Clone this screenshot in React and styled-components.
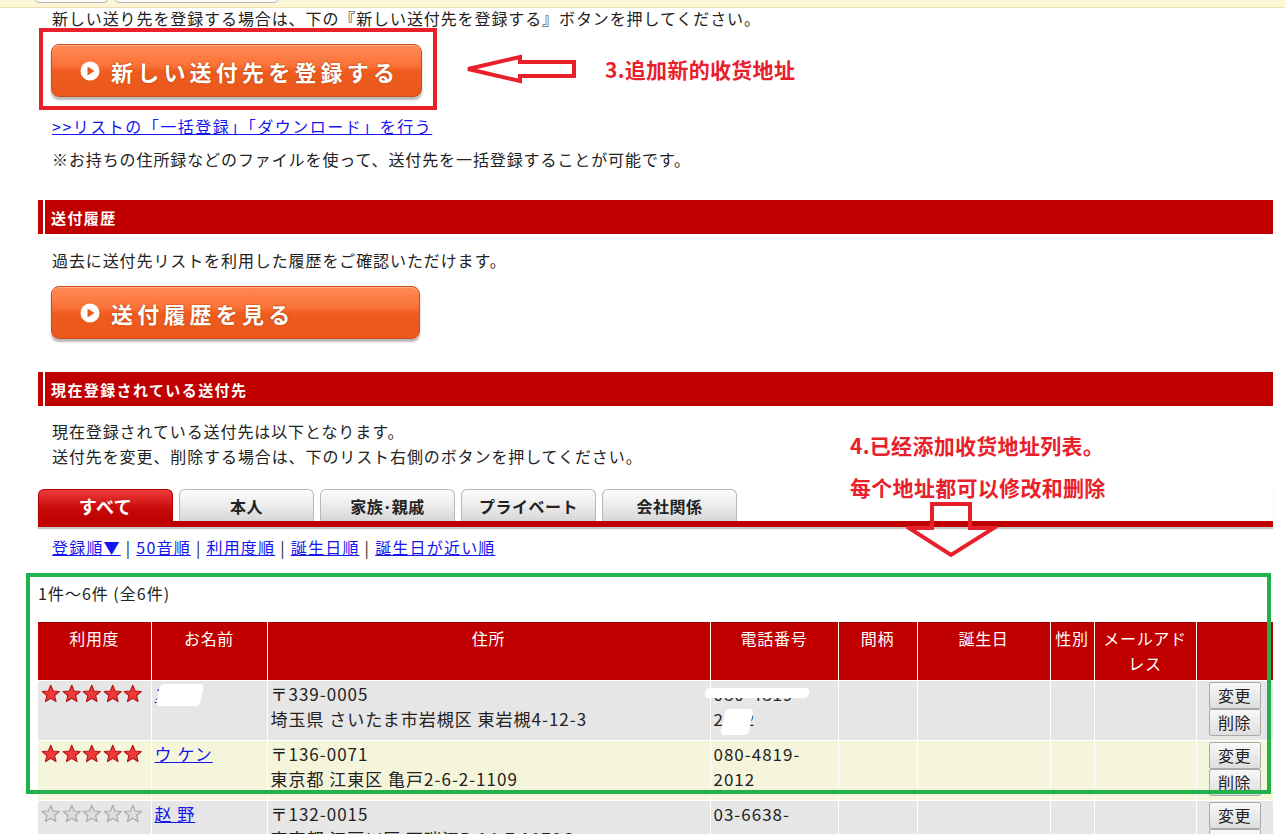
import React from 'react';
import styled, {createGlobalStyle} from "styled-components";

const GlobalStyle = createGlobalStyle`
  html, body {
    margin: 0;
    padding: 0;
    overflow: hidden;
    background: #fff;
  }
  body {
    font-family: "Noto Sans CJK JP", "Liberation Sans", sans-serif;
    color: #222;
  }
`;

const RED = "#c00000";
const MARK = "#e8202a";
const LINK = "#1515ee";

/* top strip */
const TopStrip = styled.div`
  height: 7px;
  background: #fdf6d6;
  border-bottom: 1px solid #eee2b0;
  display: flex;
  gap: 7px;
  padding-left: 35px;
  align-items: flex-end;
  overflow: hidden;
`;

const StripTab = styled.div`
  width: ${(props) => props.$w}px;
  height: 10px;
  margin-bottom: 4px;
  border: 1px solid #b8b8b8;
  border-radius: 0 0 4px 4px;
  background: #fbfbfb;
`;

const Page = styled.div`
  position: relative;
  width: 1235px;
  padding-left: 38px;
  letter-spacing: 0.9px;
`;

const Text = styled.p`
  margin: ${(props) => props.$mt || 0}px 0 0;
  padding-left: 14px;
  font-size: 16px;
  line-height: ${(props) => props.$lh || 20}px;
  letter-spacing: ${(props) => props.$ls || 0.9}px;
  white-space: nowrap;
`;

const Link = styled.a`
  color: ${LINK};
  text-decoration: underline;
  cursor: pointer;
`;

/* annotation */
const MarkRow = styled.div`
  display: flex;
  align-items: center;
`;

const MarkBox = styled.div`
  margin-left: 1px;
  border: 4px solid ${MARK};
  padding: 12px 11px 9px 8px;
`;

const MarkText = styled.span`
  font-family: "Noto Sans CJK SC", "Liberation Sans", sans-serif;
  font-weight: 700;
  font-size: 21px;
  line-height: ${(props) => props.$lh || 30}px;
  color: ${MARK};
  letter-spacing: 0.3px;
  margin-left: ${(props) => props.$ml || 0}px;
  display: block;
  white-space: nowrap;
`;

const ArrowSvg = styled.svg`
  display: block;
  margin-left: ${(props) => props.$ml || 0}px;
  flex: none;
`;

const Note4 = styled.div`
  position: absolute;
  left: 850px;
  top: 416px;
`;

const DownArrow = styled.svg`
  position: absolute;
  left: 906px;
  top: 493px;
`;

const GreenBox = styled.div`
  position: absolute;
  left: 26px;
  top: 565px;
  width: 1237px;
  height: 213px;
  border: 4px solid #22b14c;
  pointer-events: none;
`;

/* orange button */
const OrangeButton = styled.button`
  display: flex;
  align-items: center;
  gap: 11px;
  width: ${(props) => props.$w}px;
  height: 53px;
  margin-left: ${(props) => props.$ml || 0}px;
  margin-top: ${(props) => props.$mt || 0}px;
  padding: 0 0 0 28px;
  border: 1px solid #d04a14;
  border-radius: 8px;
  background: linear-gradient(#ff8a55 0%, #fb7238 40%, #ef5c1f 52%, #ea571b 100%);
  box-shadow: inset 0 1px 0 #ffb08a, 0 3px 2px rgba(0, 0, 0, 0.28);
  color: #fff;
  font-family: "Noto Sans CJK JP", sans-serif;
  font-weight: 700;
  font-size: 22px;
  letter-spacing: 4.2px;
  text-shadow: 0 0 2px #b9400c, 0 0 1px #b9400c;
  cursor: pointer;
`;

const PlayIcon = () => (
  <svg width="20" height="20" viewBox="0 0 20 20">
    <circle cx="10" cy="10" r="9.5" fill="#fff" />
    <polygon points="7.5,5.5 14.5,10 7.5,14.5" fill="#ee5a1e" />
  </svg>
);

/* section header */
const SectionHeader = styled.h3`
  margin: ${(props) => props.$mt || 0}px 0 0;
  height: 34px;
  display: flex;
  align-items: center;
  padding-left: 8px;
  background: ${RED};
  border-left: 5px solid ${RED};
  box-shadow: inset 2px 0 0 #fff;
  color: #fff;
  font-size: 15px;
  font-weight: 700;
  letter-spacing: 1.4px;
`;

/* tabs */
const TabBar = styled.div`
  margin-top: 20px;
  display: flex;
  gap: 6px;
  border-bottom: 6px solid ${RED};
  box-shadow: 0 2px 1px #c8c8c8;
`;

const Tab = styled.div`
  width: 135px;
  height: 32px;
  box-sizing: border-box;
  display: flex;
  align-items: center;
  justify-content: center;
  border: 1px solid ${(props) => (props.$active ? "#b00000" : "#b8b8b8")};
  border-bottom: none;
  border-radius: 6px 6px 0 0;
  background: ${(props) => (props.$active
    ? "linear-gradient(#ef3b3b, #c80a0a 60%, #c00000)"
    : "linear-gradient(#fdfdfd, #ececec 50%, #d6d6d6)")};
  color: ${(props) => (props.$active ? "#fff" : "#222")};
  font-size: ${(props) => (props.$active ? 18 : 16)}px;
  font-weight: 700;
  letter-spacing: 0.5px;
`;

const SortRow = styled.div`
  margin-top: 9px;
  padding-left: 14px;
  font-size: 16px;
  line-height: 22px;
  letter-spacing: 1.2px;
  white-space: nowrap;
`;

const Sep = styled.span`
  margin: 0 5px;
  color: #222;
`;

/* table */
const TableSection = styled.div`
  margin-top: 13px;
  padding-top: 11px;
`;

const Count = styled.div`
  font-size: 16px;
  line-height: 22px;
  letter-spacing: 1px;
`;

const Table = styled.table`
  margin-top: 18px;
  width: 1235px;
  table-layout: fixed;
  border-collapse: collapse;
  letter-spacing: 1px;
`;

const Th = styled.th`
  background: ${RED};
  color: #fff;
  font-weight: 400;
  font-size: 16px;
  letter-spacing: 0.7px;
  line-height: 25px;
  height: 58px;
  padding: 3px 2px 0;
  vertical-align: top;
  text-align: center;
  border-left: 1px solid #fff;
  border-right: 1px solid #fff;
  border-top: 1px solid #9a0000;
  box-sizing: border-box;

  &:first-child {
    border-left: none;
  }
`;

const Row = styled.tr`
  background: ${(props) => (props.$alt ? "#f5f5dc" : "#e6e6e6")};
`;

const Td = styled.td`
  height: 60px;
  padding: 0 3px;
  vertical-align: top;
  font-size: 17px;
  line-height: 25px;
  border: 1px solid #fff;
  box-sizing: border-box;
  position: relative;

  &:first-child {
    border-left: none;
  }
`;

const Stars = styled.div`
  display: flex;
  gap: 1px;
  padding-top: 3px;
`;

const Blot = styled.span`
  position: absolute;
  left: ${(props) => props.$x}px;
  top: ${(props) => props.$y}px;
  width: ${(props) => props.$w}px;
  height: ${(props) => props.$h}px;
  background: #fff;
  border-radius: 4px;
  transform: skewX(-12deg);
`;

const Actions = styled.div`
  display: flex;
  flex-direction: column;
  align-items: center;
  padding-top: 1px;
`;

const SmallButton = styled.button`
  width: 52px;
  height: 27px;
  padding: 0;
  border: 1px solid #a9a9a9;
  border-radius: 2px;
  background: linear-gradient(#f8f8f8, #dedede);
  font-family: "Noto Sans CJK JP", sans-serif;
  font-size: 16px;
  letter-spacing: 0.5px;
  color: #222;
  line-height: 25px;
`;

const Star = ({on}) => (
  <svg width="19.5" height="19.5" viewBox="0 0 24 24">
    <polygon
      points="12,1.5 14.9,8.6 22.5,9.2 16.7,14.1 18.5,21.6 12,17.6 5.5,21.6 7.3,14.1 1.5,9.2 9.1,8.6"
      fill={on ? "#f03a3a" : "#dedede"}
      stroke={on ? "#b31414" : "#a8a8a8"}
      strokeWidth="1.4"
      strokeLinejoin="round"
    />
  </svg>
);

const cols = [113, 116, 443, 128, 79, 133, 44, 102, 77];
const heads = ["利用度", "お名前", "住所", "電話番号", "間柄", "誕生日", "性別", "メールアドレス", ""];

const rows = [
  {stars: true, name: "", zip: "〒339-0005", addr: "埼玉県 さいたま市岩槻区 東岩槻4-12-3", tel: ["080-4819-", "2012"], hide: true},
  {stars: true, name: "ウ ケン", zip: "〒136-0071", addr: "東京都 江東区 亀戸2-6-2-1109", tel: ["080-4819-", "2012"], alt: true},
  {stars: false, name: "赵 野", zip: "〒132-0015", addr: "東京都 江戸川区 西瑞江5-14-7 1170G-1701", tel: ["03-6638-", "0043"]},
];

export default function App() {
  return (
    <>
      <GlobalStyle />
      <TopStrip>
        <StripTab $w={71} />
        <StripTab $w={161} />
      </TopStrip>
      <Page>
        <Text>新しい送り先を登録する場合は、下の『新しい送付先を登録する』ボタンを押してください。</Text>

        <MarkRow>
          <MarkBox>
            <OrangeButton $w={371}>
              <PlayIcon />
              新しい送付先を登録する
            </OrangeButton>
          </MarkBox>
          <ArrowSvg $ml={28} width="112" height="32" viewBox="0 0 112 32">
            <polygon points="3,16 55,4 55,9 109,9 109,23 55,23 55,28" fill="none" stroke={MARK} strokeWidth="4" strokeLinejoin="miter" />
          </ArrowSvg>
          <MarkText $ml={28}>3.追加新的收货地址</MarkText>
        </MarkRow>

        <Text $mt={5} $lh={22} $ls={1.5}><Link>&gt;&gt;リストの「一括登録」「ダウンロード」を行う</Link></Text>
        <Text $mt={11} $lh={22}>※お持ちの住所録などのファイルを使って、送付先を一括登録することが可能です。</Text>

        <SectionHeader $mt={30}>送付履歴</SectionHeader>
        <Text $mt={15} $lh={22}>過去に送付先リストを利用した履歴をご確認いただけます。</Text>
        <OrangeButton $w={369} $ml={13} $mt={15}>
          <PlayIcon />
          送付履歴を見る
        </OrangeButton>

        <SectionHeader $mt={33}>現在登録されている送付先</SectionHeader>
        <Text $mt={13} $lh={25}>現在登録されている送付先は以下となります。</Text>
        <Text $lh={25}>送付先を変更、削除する場合は、下のリスト右側のボタンを押してください。</Text>

        <TabBar>
          <Tab $active>すべて</Tab>
          <Tab>本人</Tab>
          <Tab>家族･親戚</Tab>
          <Tab>プライベート</Tab>
          <Tab>会社関係</Tab>
        </TabBar>

        <SortRow>
          <Link>登録順▼</Link><Sep>|</Sep>
          <Link>50音順</Link><Sep>|</Sep>
          <Link>利用度順</Link><Sep>|</Sep>
          <Link>誕生日順</Link><Sep>|</Sep>
          <Link>誕生日が近い順</Link>
        </SortRow>

        <TableSection>
          <Count>1件～6件 (全6件)</Count>
          <Table>
            <colgroup>
              {cols.map((w, i) => <col key={i} style={{width: w}} />)}
            </colgroup>
            <thead>
              <tr>
                {heads.map((h, i) => <Th key={i}>{h}</Th>)}
              </tr>
            </thead>
            <tbody>
              {rows.map((r, i) => (
                <Row key={i} $alt={r.alt}>
                  <Td>
                    <Stars>
                      {[0, 1, 2, 3, 4].map((s) => <Star key={s} on={r.stars} />)}
                    </Stars>
                  </Td>
                  <Td>
                    {r.hide ? (
                      <>
                        <Link>ニ ト</Link>
                        <Blot $x={6} $y={3} $w={44} $h={22} />
                      </>
                    ) : (
                      <Link>{r.name}</Link>
                    )}
                  </Td>
                  <Td>
                    <div>{r.zip}</div>
                    <div>{r.addr}</div>
                  </Td>
                  <Td>
                    <div>{r.tel[0]}</div>
                    <div>{r.tel[1]}</div>
                    {r.hide && (
                      <>
                        <Blot $x={-6} $y={7} $w={104} $h={10} />
                        <Blot $x={12} $y={28} $w={28} $h={26} />
                      </>
                    )}
                  </Td>
                  <Td />
                  <Td />
                  <Td />
                  <Td />
                  <Td>
                    <Actions>
                      <SmallButton>変更</SmallButton>
                      <SmallButton>削除</SmallButton>
                    </Actions>
                  </Td>
                </Row>
              ))}
            </tbody>
          </Table>
        </TableSection>

        <Note4>
          <MarkText $lh={42}>4.已经添加收货地址列表。</MarkText>
          <MarkText $lh={42}>每个地址都可以修改和删除</MarkText>
        </Note4>
        <DownArrow width="92" height="58" viewBox="0 0 92 58">
          <polygon points="26,3 64,3 64,27 88,27 45,54 3,27 26,27" fill="none" stroke={MARK} strokeWidth="4" strokeLinejoin="miter" />
        </DownArrow>
        <GreenBox />
      </Page>
    </>
  );
}
